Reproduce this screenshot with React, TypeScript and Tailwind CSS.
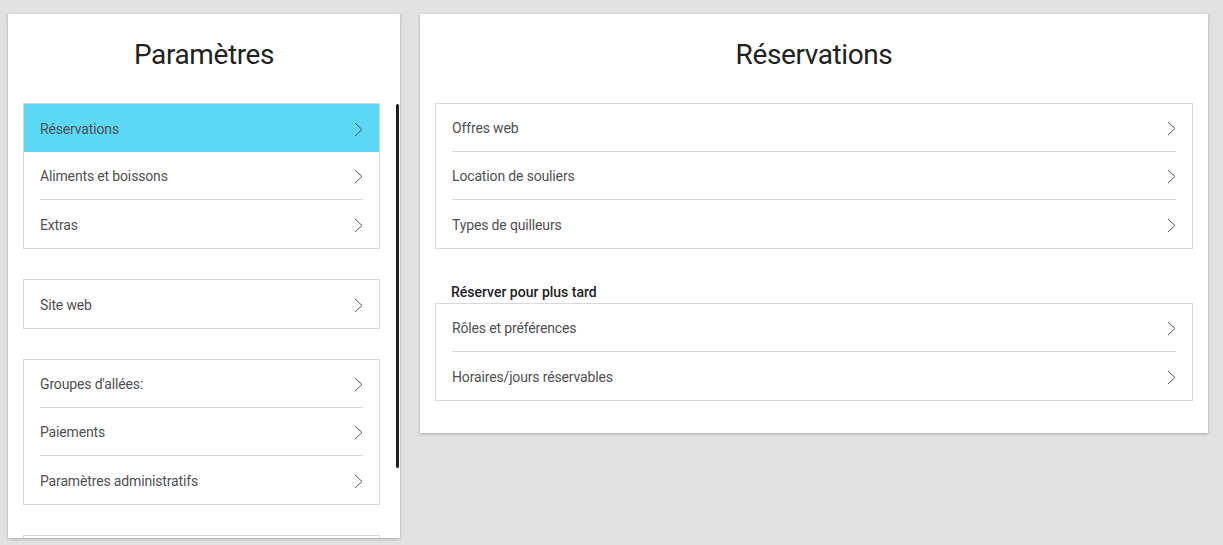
import React from "react";

function Chevron() {
  return (
    <svg width="9" height="15" viewBox="0 0 9 15" fill="none" className="shrink-0">
      <path d="M1 1l7 6.5L1 14" stroke="#555" strokeWidth="1" />
    </svg>
  );
}

type Item = { label: string; active?: boolean };

function Group({ items }: { items: Item[] }) {
  return (
    <div className="border border-[#d9d9d9] bg-white">
      {items.map((it, i) => (
        <div
          key={it.label + i}
          className={it.active ? "bg-[#5ad8f6] px-4" : "px-4"}
        >
          <div
            className={
              "h-12 pt-[2px] flex items-center justify-between" +
              (i < items.length - 1 && !it.active ? " border-b border-[#d9d9d9]" : "")
            }
          >
            <span className="text-[14px] text-[#505050] tracking-[-0.15px]">{it.label}</span>
            <Chevron />
          </div>
        </div>
      ))}
    </div>
  );
}

export default function App() {
  return (
    <div className="min-h-[545px] bg-[#e2e2e2] flex items-start gap-5 pl-2 pt-[14px] font-['Roboto','Liberation_Sans',sans-serif]">
      <div className="relative w-[392px] h-[524px] bg-white shadow-[0_1px_3px_rgba(0,0,0,0.25)] overflow-hidden">
        <h1 className="mt-[23px] h-9 leading-9 text-center text-[28px] text-[#222] tracking-[-0.4px] mb-[30px]">
          Paramètres
        </h1>
        <div className="ml-[15px] mr-5 flex flex-col gap-[30px]">
          <Group
            items={[
              { label: "Réservations", active: true },
              { label: "Aliments et boissons" },
              { label: "Extras" },
            ]}
          />
          <Group items={[{ label: "Site web" }]} />
          <Group
            items={[
              { label: "Groupes d'allées:" },
              { label: "Paiements" },
              { label: "Paramètres administratifs" },
            ]}
          />
          <div className="h-12 border border-[#d9d9d9]" />
        </div>
        <div className="absolute left-[388px] top-[90px] w-[3px] h-[364px] rounded-full bg-[#1f1f1f]" />
      </div>

      <div className="w-[788px] bg-white shadow-[0_1px_3px_rgba(0,0,0,0.25)] px-[15px] pb-8">
        <h1 className="mt-[23px] h-9 leading-9 text-center text-[28px] text-[#222] tracking-[-0.4px] mb-[30px]">
          Réservations
        </h1>
        <Group
          items={[
            { label: "Offres web" },
            { label: "Location de souliers" },
            { label: "Types de quilleurs" },
          ]}
        />
        <div className="mt-[33px] mb-px h-5 leading-5 pl-4 text-[14px] font-medium text-[#222]">
          Réserver pour plus tard
        </div>
        <Group
          items={[
            { label: "Rôles et préférences" },
            { label: "Horaires/jours réservables" },
          ]}
        />
      </div>
    </div>
  );
}
